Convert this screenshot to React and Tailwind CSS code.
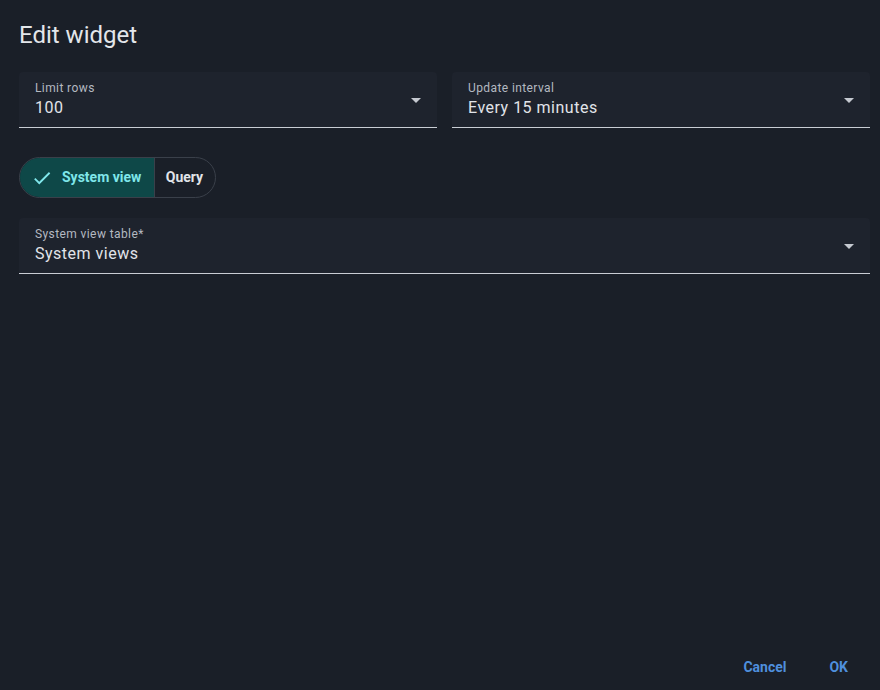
import React from "react";

const Caret = () => (
  <svg width="24" height="24" viewBox="0 0 24 24" className="fill-[#c5c9d0]">
    <path d="M7 10l5 5 5-5z" />
  </svg>
);

const SelectField = ({ label, value }) => (
  <div className="flex h-[56px] items-center justify-between rounded-t-[4px] border-b border-[#c9cdd4] bg-[#1e232d] pl-4 pr-[9px]">
    <div className="flex flex-col">
      <span className="text-[12px] leading-[15px] tracking-[0.4px] text-[#b4b9c1]">{label}</span>
      <span className="text-[16px] leading-[23px] tracking-[0.5px] text-[#e1e4e9]">{value}</span>
    </div>
    <Caret />
  </div>
);

export default function App() {
  return (
    <div
      className="flex h-[690px] flex-col bg-[#1a1f28] pl-[19px] pr-[10px]"
      style={{ fontFamily: "Roboto, 'Liberation Sans', sans-serif" }}
    >
      <h1 className="pt-[19px] text-[24px] leading-[32px] font-normal text-[#e3e6ea]">Edit widget</h1>

      <div className="mt-[21px] grid grid-cols-2 gap-[15px]">
        <SelectField label="Limit rows" value="100" />
        <SelectField label="Update interval" value="Every 15 minutes" />
      </div>

      <div className="mt-[29px] flex h-[41px] w-[197px] overflow-hidden rounded-full border border-[#3a404a]">
        <div className="flex w-[135px] items-center gap-[9px] border-r border-[#3a404a] bg-[#0e4848] pl-[11px]">
          <svg width="22" height="22" viewBox="0 0 24 24" className="fill-[#7fe6ea]">
            <path d="M9 16.17L4.83 12l-1.42 1.41L9 19 21 7l-1.41-1.41z" />
          </svg>
          <span className="text-[14px] font-bold text-[#7fe6ea]">System view</span>
        </div>
        <div className="flex flex-1 items-center justify-center pr-[1px]">
          <span className="text-[14px] font-bold text-[#e1e4e9]">Query</span>
        </div>
      </div>

      <div className="mt-[20px]">
        <SelectField label="System view table*" value="System views" />
      </div>

      <div className="mt-auto flex justify-end gap-[43px] pb-[12px] pr-[22px]">
        <button className="text-[14px] font-bold text-[#4f8fdd]">Cancel</button>
        <button className="text-[14px] font-bold text-[#4f8fdd]">OK</button>
      </div>
    </div>
  );
}
